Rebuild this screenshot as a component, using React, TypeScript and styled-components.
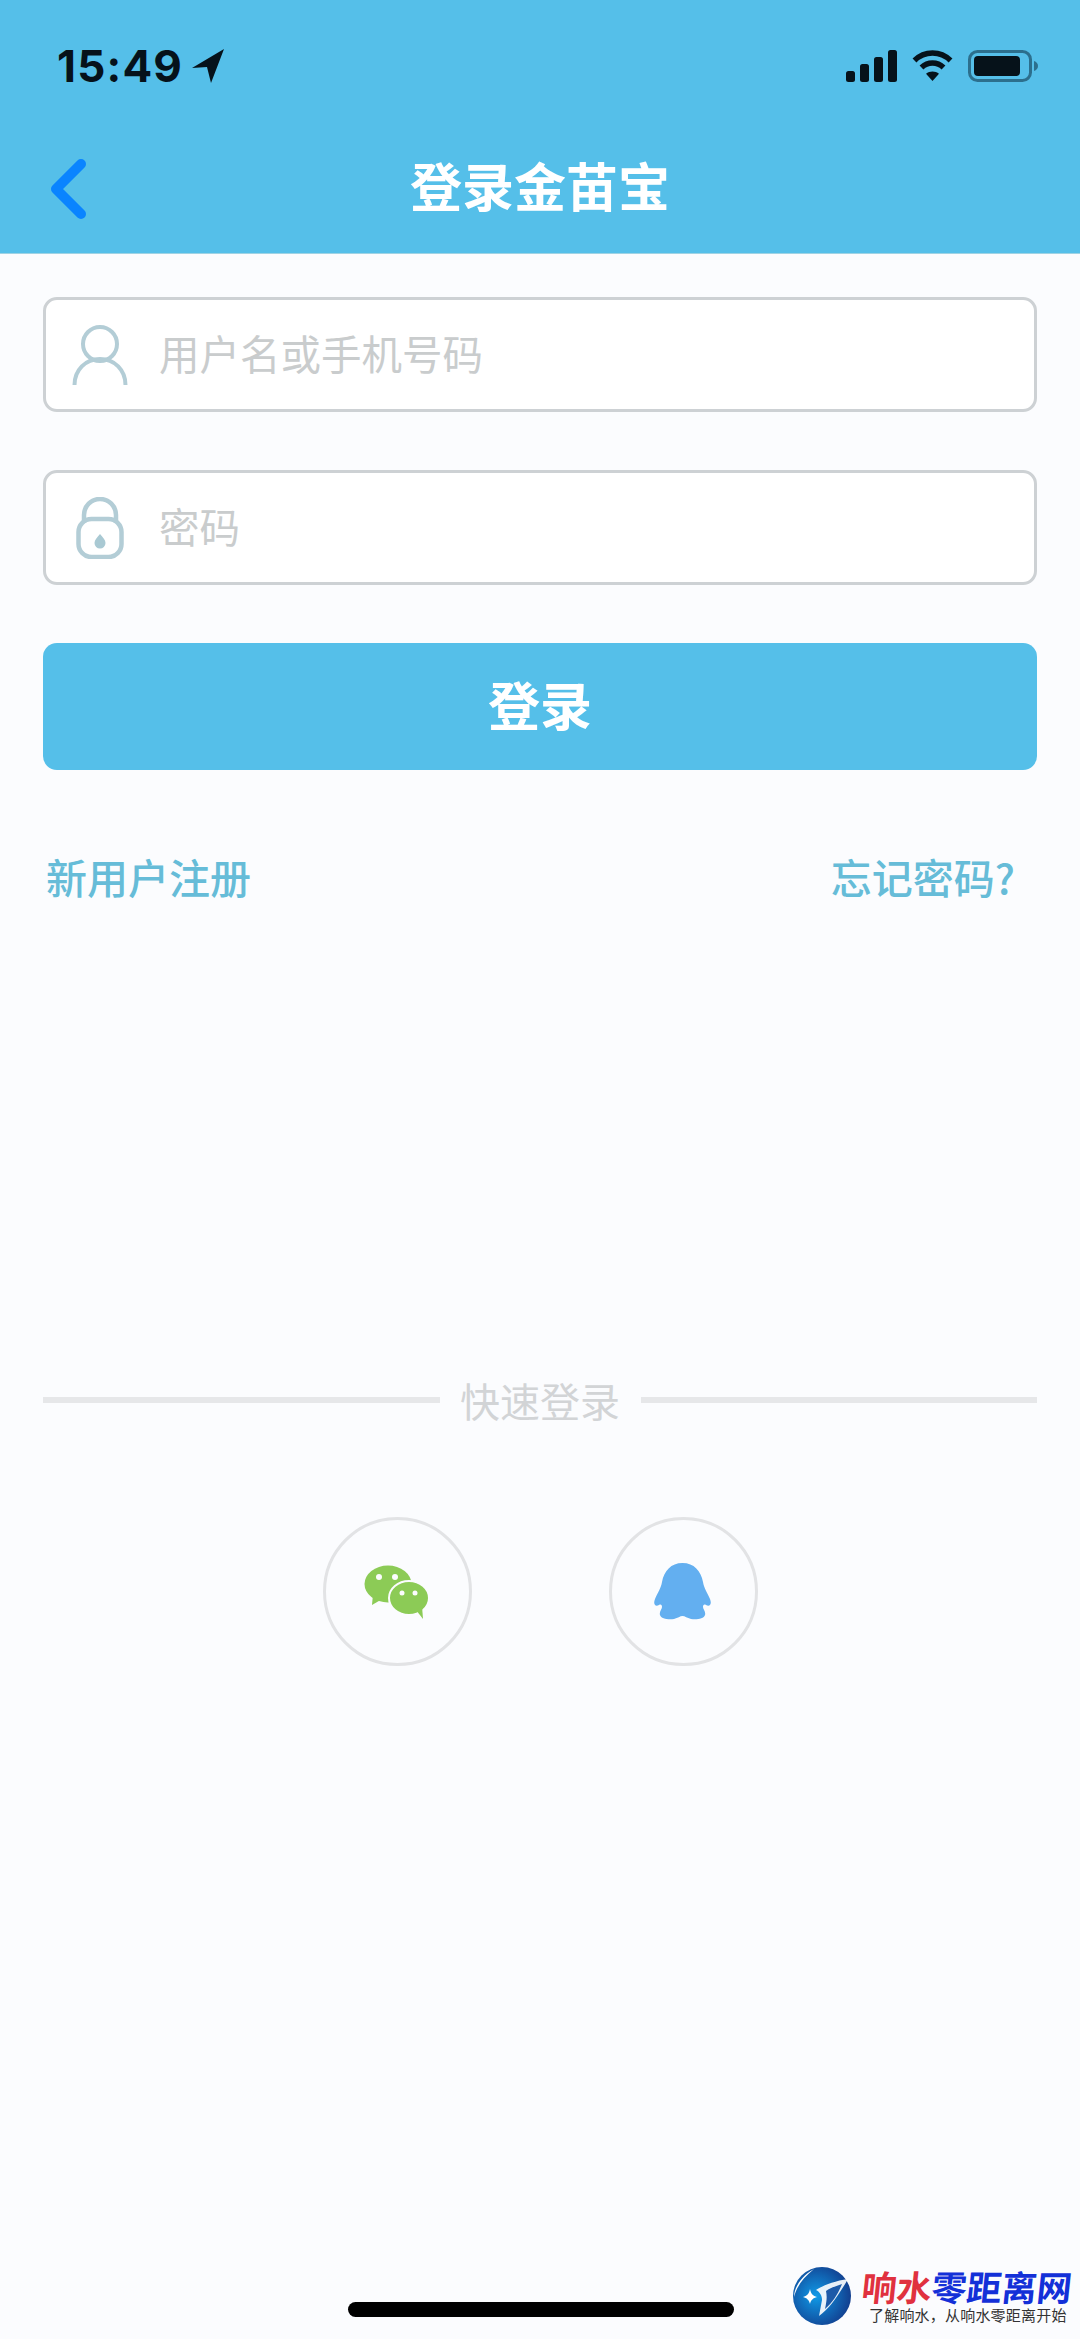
import * as React from 'react';
import styled, { createGlobalStyle } from 'styled-components';

const CJK = `"Noto Sans CJK SC", "Liberation Sans", sans-serif`;

const GlobalStyle = createGlobalStyle`
  html, body { margin: 0; padding: 0; background: #fbfcfe; }
  * { box-sizing: border-box; }
`;

const Page = styled.div`
  position: relative;
  display: flex;
  flex-direction: column;
  width: 1080px;
  height: 2339px;
  overflow: hidden;
  background: #fbfcfe;
  font-family: ${CJK};
`;

const Header = styled.header`
  height: 254px;
  flex: none;
  background: #55bfe9;
  border-bottom: 1px solid #9fd3e4;
`;

const StatusBar = styled.div`
  display: flex;
  justify-content: space-between;
  align-items: center;
  height: 132px;
  padding: 0 42px 0 57px;
`;

const StatusGroup = styled.div`
  display: flex;
  align-items: center;
  gap: ${(p: { $gap: number }) => p.$gap}px;
`;

const Time = styled.span`
  font-family: Inter, "Liberation Sans", sans-serif;
  font-size: 44px;
  font-weight: 700;
  line-height: 1;
  letter-spacing: 1.2px;
  color: #06121a;
`;

const NavBar = styled.div`
  position: relative;
  display: flex;
  align-items: center;
  justify-content: center;
  height: 116px;
  padding-bottom: 10px;
`;

const BackIcon = styled.svg`
  position: absolute;
  left: 48px;
  top: 26px;
`;

const Title = styled.h1`
  margin: 0;
  font-size: 52px;
  font-weight: 700;
  line-height: 1;
  color: #fff;
`;

const Form = styled.main`
  display: flex;
  flex-direction: column;
  padding: 43px 43px 0;
`;

const Field = styled.div`
  display: flex;
  align-items: center;
  height: 115px;
  margin-bottom: 58px;
  padding-left: 26px;
  background: #fff;
  border: 3px solid #cdd1d4;
  border-radius: 14px;
`;

const FieldIcon = styled.div`
  display: flex;
  justify-content: center;
  width: 56px;
  margin-right: 31px;
`;

const Placeholder = styled.span`
  padding-bottom: 3px;
  font-size: 40.5px;
  line-height: 1;
  color: #c9cccd;
`;

const SubmitButton = styled.button`
  height: 127px;
  padding: 0 0 6px;
  border: 0;
  border-radius: 14px;
  background: #55bfe9;
  font-family: ${CJK};
  font-size: 52px;
  font-weight: 700;
  color: #fff;
`;

const LinkRow = styled.div`
  display: flex;
  justify-content: space-between;
  margin-top: 77px;
  padding: 0 22px 0 3px;
`;

const TextLink = styled.a`
  font-size: 41px;
  font-weight: 500;
  line-height: 58px;
  color: #66bcd8;
`;

const QuickLogin = styled.section`
  display: flex;
  flex-direction: column;
  align-items: center;
  margin-top: 466px;
  padding: 0 43px;
`;

const DividerRow = styled.div`
  display: flex;
  align-items: center;
  width: 100%;
  height: 58px;
`;

const DividerLine = styled.span`
  flex: 1;
  height: 6px;
  background: #e6e7e9;
`;

const DividerLabel = styled.span`
  width: 201px;
  text-align: center;
  font-size: 40px;
  line-height: 1;
  color: #d2d4d6;
`;

const SocialRow = styled.div`
  display: flex;
  gap: 137px;
  margin-top: 88px;
`;

const SocialButton = styled.div`
  display: flex;
  align-items: center;
  justify-content: center;
  width: 149px;
  height: 149px;
  border: 3px solid #e2e3e5;
  border-radius: 50%;
`;

const HomeBar = styled.div`
  position: absolute;
  left: 348px;
  bottom: 22px;
  width: 386px;
  height: 15px;
  border-radius: 8px;
  background: #000;
`;

const Watermark = styled.div`
  position: absolute;
  left: 792px;
  top: 2266px;
  display: flex;
  gap: 10px;
  width: 288px;
`;

const WatermarkText = styled.div`
  display: flex;
  flex-direction: column;
  align-items: flex-start;
`;

const WatermarkBrand = styled.div`
  font-size: 35px;
  font-weight: 700;
  line-height: 40px;
  white-space: nowrap;
  transform: skewX(-6deg);
`;

const BrandPart = styled.span<{ $color: string }>`
  color: ${p => p.$color};
`;

const WatermarkSlogan = styled.div`
  margin-left: 7px;
  font-size: 15px;
  line-height: 18px;
  letter-spacing: 0.2px;
  white-space: nowrap;
  color: #333;
`;

function SignalIcon() {
  return (
    <svg width="51" height="32" viewBox="0 0 51 32">
      <rect x="0" y="21" width="9" height="11" rx="2.5" fill="#06121a" />
      <rect x="14" y="14" width="9" height="18" rx="2.5" fill="#06121a" />
      <rect x="28" y="7" width="9" height="25" rx="2.5" fill="#06121a" />
      <rect x="42" y="0" width="9" height="32" rx="2.5" fill="#06121a" />
    </svg>
  );
}

function WifiIcon() {
  return (
    <svg width="41" height="32" viewBox="0 0 41 32" fill="none" stroke="#06121a" strokeWidth="5.5">
      <path d="M2.5 10.5c10-10 26-10 36 0" />
      <path d="M9.5 17.5c6.2-6 15.800-6 22 0" />
      <path d="M20.500 31l-6.500-7.200c3.600-3.200 9.400-3.200 13 0z" fill="#06121a" stroke="none" />
    </svg>
  );
}

function BatteryIcon() {
  return (
    <svg width="70" height="32" viewBox="0 0 70 32">
      <rect x="1.500" y="1.500" width="61" height="29" rx="8" fill="none" stroke="#2c6f8d" strokeWidth="3" />
      <rect x="6" y="6" width="46" height="20" rx="4" fill="#06121a" />
      <path d="M66 11c2.500.8 4 2.600 4 5s-1.500 4.200-4 5z" fill="#2c6f8d" />
    </svg>
  );
}

function UserIcon() {
  return (
    <svg width="56" height="60" viewBox="0 0 56 60" fill="none" stroke="#b3cdd6" strokeWidth="4">
      <circle cx="28" cy="19" r="17" />
      <path d="M2.500 60c0-15 11-26 25.500-26s25.500 11 25.500 26" />
    </svg>
  );
}

function LockIcon() {
  return (
    <svg width="48" height="62" viewBox="0 0 48 62" fill="none" stroke="#b3cdd6" strokeWidth="4.500">
      <path d="M8 26v-8a16 16 0 0 1 32 0v8" />
      <rect x="2.500" y="22" width="43" height="38" rx="13" />
      <path d="M24 37c3 3.500 5.500 6 5.500 9a5.500 5.500 0 0 1-11 0c0-3 2.500-5.500 5.500-9z" fill="#a9c9d3" stroke="none" />
    </svg>
  );
}

function WeChatIcon() {
  return (
    <svg width="66" height="54" viewBox="0 0 66 54">
      <ellipse cx="24" cy="19" rx="23.500" ry="18.500" fill="#8ccb56" />
      <path d="M9 29l-1 11 12-7z" fill="#8ccb56" />
      <ellipse cx="45" cy="33" rx="20" ry="17" fill="#8ccb56" stroke="#fbfcfe" strokeWidth="2" />
      <path d="M52 45l7 9-1-13z" fill="#8ccb56" />
      <circle cx="15" cy="12" r="3" fill="#fbfcfe" />
      <circle cx="31" cy="12" r="3" fill="#fbfcfe" />
      <circle cx="38" cy="28" r="2.500" fill="#fbfcfe" />
      <circle cx="51" cy="28" r="2.500" fill="#fbfcfe" />
    </svg>
  );
}

function QQIcon() {
  return (
    <svg width="58" height="58" viewBox="0 0 58 58">
      <path
        d="M28.500 0C40 0 47 8 49 19c1 6 4 10 7 17 2 5 0 8-4 6-2-1-3 0-3 2 0 2 3 5 2 8-1 4-9 5-14 4-4-1-6-3-8.500-3s-4.500 2-8.500 3c-5 1-13 0-14-4-1-3 2-6 2-8 0-2-1-3-3-2-4 2-6-1-4-6 3-7 6-11 7-17C10 8 17 0 28.500 0z"
        fill="#63aff0"
      />
    </svg>
  );
}

function WatermarkLogo() {
  return (
    <svg width="60" height="60" viewBox="0 0 60 60">
      <defs>
        <radialGradient id="wmGlow" cx="40%" cy="50%" r="60%">
          <stop offset="0%" stopColor="#0f9be8" />
          <stop offset="100%" stopColor="#123f8f" />
        </radialGradient>
      </defs>
      <circle cx="30" cy="30" r="29" fill="url(#wmGlow)" />
      <path d="M22 3C9 10 2 22 2 31c3-11 9-19 20-28z" fill="#fff" />
      <path d="M56 13C42 15 30 20 24 24c4 2 6 6 6 10l-3 16c11-8 19-20 29-37z" fill="#fff" opacity=".9" />
      <path d="M50 18c-6 2-12 4-16 7 1 5 1 9-1 18 8-7 13-15 17-25z" fill="#1c5aa8" />
      <path d="M18 23c1 5 3 7 7 8-4 1-6 3-7 7-1-4-3-6-7-7 4-1 6-3 7-8z" fill="#fff" />
    </svg>
  );
}

export default function App() {
  return (
    <Page>
      <GlobalStyle />
      <Header>
        <StatusBar>
          <StatusGroup $gap={8}>
            <Time>15:49</Time>
            <svg width="33" height="34" viewBox="0 0 33 34">
              <path d="M33 0L1 19l15-1 4 16z" fill="#06121a" />
            </svg>
          </StatusGroup>
          <StatusGroup $gap={15}>
            <SignalIcon />
            <WifiIcon />
            <BatteryIcon />
          </StatusGroup>
        </StatusBar>
        <NavBar>
          <BackIcon width="40" height="62" viewBox="0 0 40 62" fill="none">
            <path d="M33 6L8 31l25 25" stroke="#0a84ff" strokeWidth="10" strokeLinecap="round" strokeLinejoin="round" />
          </BackIcon>
          <Title>登录金苗宝</Title>
        </NavBar>
      </Header>
      <Form>
        <Field>
          <FieldIcon><UserIcon /></FieldIcon>
          <Placeholder>用户名或手机号码</Placeholder>
        </Field>
        <Field>
          <FieldIcon><LockIcon /></FieldIcon>
          <Placeholder>密码</Placeholder>
        </Field>
        <SubmitButton>登录</SubmitButton>
        <LinkRow>
          <TextLink>新用户注册</TextLink>
          <TextLink>忘记密码?</TextLink>
        </LinkRow>
      </Form>
      <QuickLogin>
        <DividerRow>
          <DividerLine />
          <DividerLabel>快速登录</DividerLabel>
          <DividerLine />
        </DividerRow>
        <SocialRow>
          <SocialButton><WeChatIcon /></SocialButton>
          <SocialButton><QQIcon /></SocialButton>
        </SocialRow>
      </QuickLogin>
      <HomeBar />
      <Watermark>
        <WatermarkLogo />
        <WatermarkText>
          <WatermarkBrand>
            <BrandPart $color="#e0313f">响水</BrandPart>
            <BrandPart $color="#1330d8">零距离网</BrandPart>
          </WatermarkBrand>
          <WatermarkSlogan>了解响水，从响水零距离开始</WatermarkSlogan>
        </WatermarkText>
      </Watermark>
    </Page>
  );
}
